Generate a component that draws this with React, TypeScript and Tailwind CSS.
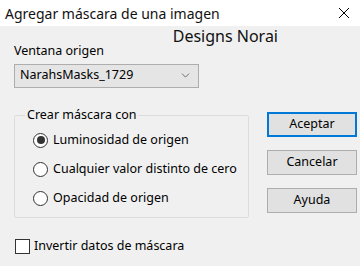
import { ChevronDown } from "lucide-react";

const font = { fontFamily: '"Noto Sans", "Liberation Sans", sans-serif' };

function Radio({ label, checked }: { label: string; checked?: boolean }) {
  return (
    <div className="flex h-[29px] items-center">
      <span className="flex h-[15px] w-[15px] items-center justify-center rounded-full border border-[#333] bg-white">
        {checked && <span className="h-[8px] w-[8px] rounded-full bg-[#333]" />}
      </span>
      <span className="ml-[5px] text-[12.5px] text-black">{label}</span>
    </div>
  );
}

function Btn({ label, primary }: { label: string; primary?: boolean }) {
  return (
    <button
      className={
        "flex h-[25px] w-[90px] items-center justify-center bg-[#e1e1e1] text-[12.5px] text-black " +
        (primary ? "border-2 border-[#0078d7]" : "border border-[#adadad]")
      }
    >
      {label}
    </button>
  );
}

export default function App() {
  return (
    <div className="h-[266px] w-[360px] overflow-hidden bg-[#f0f0f0]" style={font}>
      {/* title bar */}
      <div className="flex h-[26px] items-center justify-between bg-white pl-[5px] pr-[8px]">
        <span className="text-[14px] text-[#111]">Agregar máscara de una imagen</span>
        <svg width="12" height="12" viewBox="0 0 12 12" className="mr-[2px]">
          <path d="M1 1 L11 11 M11 1 L1 11" stroke="#000" strokeWidth="1" />
        </svg>
      </div>

      <div className="flex">
        {/* left column */}
        <div className="w-[250px] pl-[14px]">
          <div className="flex h-[18px] justify-end">
            <span className="mr-[-28px] text-[16px] leading-[20px] text-[#111]">Designs Norai</span>
          </div>
          <div className="mt-[-2px] text-[12.5px] text-black">Ventana origen</div>
          <div className="mt-[3px] flex h-[24px] w-[185px] items-center justify-between border border-[#adadad] bg-[#e5e5e5] pl-[5px] pr-[6px] text-[12.5px] text-black">
            <span>NarahsMasks_1729</span>
            <ChevronDown size={13} strokeWidth={1.5} color="#555" />
          </div>

          <fieldset className="mt-[18px] h-[112px] w-[235px] rounded-[2px] border border-[#dcdcdc] pl-[18px] pt-[1px]">
            <legend className="ml-[-8px] px-[2px] text-[12.5px] text-black">Crear máscara con</legend>
            <Radio label="Luminosidad de origen" checked />
            <Radio label="Cualquier valor distinto de cero" />
            <Radio label="Opacidad de origen" />
          </fieldset>

          <div className="mt-[19px] flex items-center">
            <span className="ml-[1px] h-[15px] w-[15px] border border-[#333] bg-white" />
            <span className="ml-[4px] text-[12.5px] text-black">Invertir datos de máscara</span>
          </div>
        </div>

        {/* buttons */}
        <div className="ml-[17px] flex flex-col gap-[13px] pt-[86px]">
          <Btn label="Aceptar" primary />
          <Btn label="Cancelar" />
          <Btn label="Ayuda" />
        </div>
      </div>
    </div>
  );
}
